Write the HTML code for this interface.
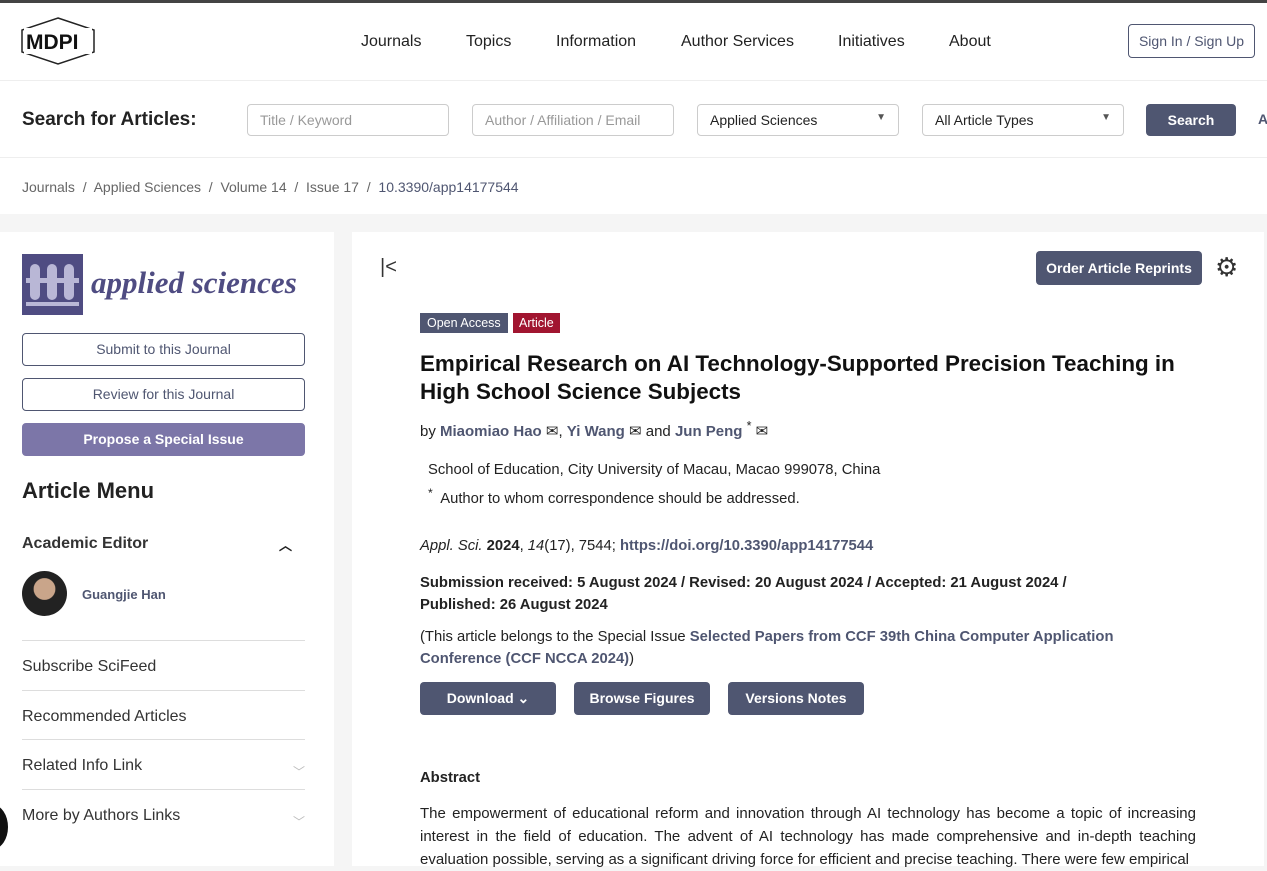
<!DOCTYPE html>
<html><head><style>
*{box-sizing:border-box;margin:0;padding:0}
body{width:1267px;height:866px;overflow:hidden;font-family:"Liberation Sans",sans-serif;background:#f5f5f5;color:#222;position:relative}
.abs{position:absolute}
a{color:#4f5671;text-decoration:none}
.hdr{position:absolute;left:0;top:0;width:1267px;height:214px;background:#fff;border-top:3px solid #444}
.nav span{position:absolute;top:30px;font-size:16px;color:#222}
.inp{position:absolute;top:101px;height:32px;border:1px solid #ccc;border-radius:4px;font-size:14px;color:#999;padding:7px 12px}
.sel{color:#222}
.btn{position:absolute;background:#4f5671;color:#fff;font-weight:bold;font-size:14px;border-radius:4px;text-align:center}
.side{position:absolute;left:0;top:232px;width:334px;height:634px;background:#fff}
.main{position:absolute;left:352px;top:232px;width:912px;height:634px;background:#fff}
.ob{position:absolute;left:22px;width:283px;height:33px;border:1px solid #4f5671;border-radius:4px;text-align:center;font-size:14px;line-height:31px;color:#4f5671}
.mi{position:absolute;left:22px;width:283px;font-size:16px;color:#333;border-top:1px solid #ddd;padding-top:17px;height:50px}
.t{position:absolute;font-size:15px;color:#222}
</style></head><body>
<div class="hdr">
<svg class="abs" style="left:20px;top:13px" width="76" height="50"><polygon points="38,2 74,14 74,36 38,48 2,36 2,14" fill="none" stroke="#222" stroke-width="1.5"/><rect x="4" y="12" width="68" height="26" fill="#fff"/><text x="6" y="33" font-family="Liberation Sans" font-weight="bold" font-size="21" fill="#111">MDPI</text></svg>
<div class="nav"><span style="left:361px">Journals</span><span style="left:466px">Topics</span><span style="left:556px">Information</span><span style="left:681px">Author Services</span><span style="left:838px">Initiatives</span><span style="left:949px">About</span></div>
<div class="abs" style="left:1128px;top:21px;width:127px;height:34px;border:1px solid #4f5671;border-radius:4px;font-size:14px;color:#4f5671;text-align:center;line-height:32px">Sign In / Sign Up</div>
<div class="abs" style="left:0;top:77px;width:1267px;border-top:1px solid #eee"></div>
<div class="abs" style="left:22px;top:106px;font-size:19px;font-weight:bold">Search for Articles:</div>
<div class="inp" style="left:247px;width:202px">Title / Keyword</div>
<div class="inp" style="left:472px;width:202px">Author / Affiliation / Email</div>
<div class="inp sel" style="left:697px;width:202px">Applied Sciences<span style="float:right;font-size:10px;color:#555">▼</span></div>
<div class="inp sel" style="left:922px;width:202px">All Article Types<span style="float:right;font-size:10px;color:#555">▼</span></div>
<div class="btn" style="left:1146px;top:101px;width:90px;height:32px;line-height:32px">Search</div>
<div class="abs" style="left:1258px;top:108px;font-size:14px;font-weight:bold;color:#4f5671">A</div>
<div class="abs" style="left:0;top:154px;width:1267px;border-top:1px solid #eee"></div>
<div class="abs" style="left:22px;top:176px;font-size:14px;color:#666">Journals &nbsp;/&nbsp; Applied Sciences &nbsp;/&nbsp; Volume 14 &nbsp;/&nbsp; Issue 17 &nbsp;/&nbsp; <span style="color:#4f5671">10.3390/app14177544</span></div>
</div>
<div class="side">
<div class="abs" style="left:22px;top:22px;width:61px;height:61px;background:#4f4c82"><svg width="61" height="61"><g fill="#b9b7d6"><rect x="8" y="10" width="10" height="36" rx="5"/><rect x="25" y="10" width="10" height="36" rx="5"/><rect x="42" y="10" width="10" height="36" rx="5"/><rect x="4" y="24" width="53" height="5"/><rect x="4" y="48" width="53" height="4"/></g></svg></div>
<div class="abs" style="left:91px;top:33px;font-family:'Liberation Serif',serif;font-style:italic;font-weight:bold;font-size:31px;color:#4f4c82">applied sciences</div>
<div class="ob" style="top:101px">Submit to this Journal</div>
<div class="ob" style="top:146px">Review for this Journal</div>
<div class="ob" style="top:191px;background:#7c76a8;border-color:#7c76a8;color:#fff;font-weight:bold">Propose a Special Issue</div>
<div class="abs" style="left:22px;top:246px;font-size:22px;font-weight:bold">Article Menu</div>
<div class="abs" style="left:22px;top:303px;font-size:16px;font-weight:bold;color:#333">Academic Editor</div>
<div class="abs" style="left:279px;top:303px;font-size:13px;font-weight:bold">︿</div>
<div class="abs" style="left:22px;top:339px;width:45px;height:45px;border-radius:50%;background:radial-gradient(circle at 50% 40%,#c9a58a 0 30%,#222 32%)"></div>
<div class="abs" style="left:82px;top:355px;font-size:13px;font-weight:bold;color:#4f5671">Guangjie Han</div>
<div class="mi" style="top:408px">Subscribe SciFeed</div>
<div class="mi" style="top:458px">Recommended Articles</div>
<div class="mi" style="top:507px">Related Info Link<span style="float:right;color:#bbb;font-size:12px;margin-top:6px">﹀</span></div>
<div class="mi" style="top:557px">More by Authors Links<span style="float:right;color:#bbb;font-size:12px;margin-top:6px">﹀</span></div>
<div class="abs" style="left:-22px;top:573px;width:30px;height:44px;border-radius:50%;background:#111"></div>
</div>
<div class="main">
<div class="abs" style="left:28px;top:24px;font-size:20px;color:#333">|&lt;</div>
<div class="btn" style="left:684px;top:19px;width:166px;height:34px;line-height:34px">Order Article Reprints</div>
<div class="abs" style="left:863px;top:22px;font-size:26px;color:#333;line-height:26px">⚙</div>
<div class="abs" style="left:68px;top:81px;background:#4f5671;color:#fff;font-size:12.5px;padding:3px 7px">Open Access</div>
<div class="abs" style="left:161px;top:81px;background:#a11530;color:#fff;font-size:12.5px;padding:3px 6px">Article</div>
<div class="abs" style="left:68px;top:118px;width:800px;font-size:22.4px;font-weight:bold;line-height:28px;color:#111">Empirical Research on AI Technology-Supported Precision Teaching in High School Science Subjects</div>
<div class="t" style="left:68px;top:187px">by <b style="color:#4f5671">Miaomiao Hao</b> ✉, <b style="color:#4f5671">Yi Wang</b> ✉ and <b style="color:#4f5671">Jun Peng</b> <sup>*</sup> ✉</div>
<div class="t" style="left:76px;top:230px;font-size:14.8px">School of Education, City University of Macau, Macao 999078, China</div>
<div class="t" style="left:76px;top:254px;font-size:14.8px"><sup>*</sup>&nbsp; Author to whom correspondence should be addressed.</div>
<div class="t" style="left:68px;top:306px;font-size:14.8px"><i>Appl. Sci.</i> <b>2024</b>, <i>14</i>(17), 7544; <b style="color:#4f5671">https://doi.org/10.3390/app14177544</b></div>
<div class="t" style="left:68px;top:340px;font-size:14.8px;font-weight:bold;line-height:22px;width:700px">Submission received: 5 August 2024 / Revised: 20 August 2024 / Accepted: 21 August 2024 / Published: 26 August 2024</div>
<div class="t" style="left:68px;top:394px;font-size:14.8px;line-height:22px;width:740px">(This article belongs to the Special Issue <b style="color:#4f5671">Selected Papers from CCF 39th China Computer Application Conference (CCF NCCA 2024)</b>)</div>
<div class="btn" style="left:68px;top:450px;width:136px;height:33px;line-height:33px">Download ⌄</div>
<div class="btn" style="left:222px;top:450px;width:136px;height:33px;line-height:33px">Browse Figures</div>
<div class="btn" style="left:376px;top:450px;width:136px;height:33px;line-height:33px">Versions Notes</div>
<div class="t" style="left:68px;top:538px;font-weight:bold;font-size:14.8px">Abstract</div>
<div class="t" style="left:68px;top:570px;width:776px;font-size:15px;line-height:23px;text-align:justify">The empowerment of educational reform and innovation through AI technology has become a topic of increasing interest in the field of education. The advent of AI technology has made comprehensive and in-depth teaching evaluation possible, serving as a significant driving force for efficient and precise teaching. There were few empirical</div>
</div>
</body></html>
